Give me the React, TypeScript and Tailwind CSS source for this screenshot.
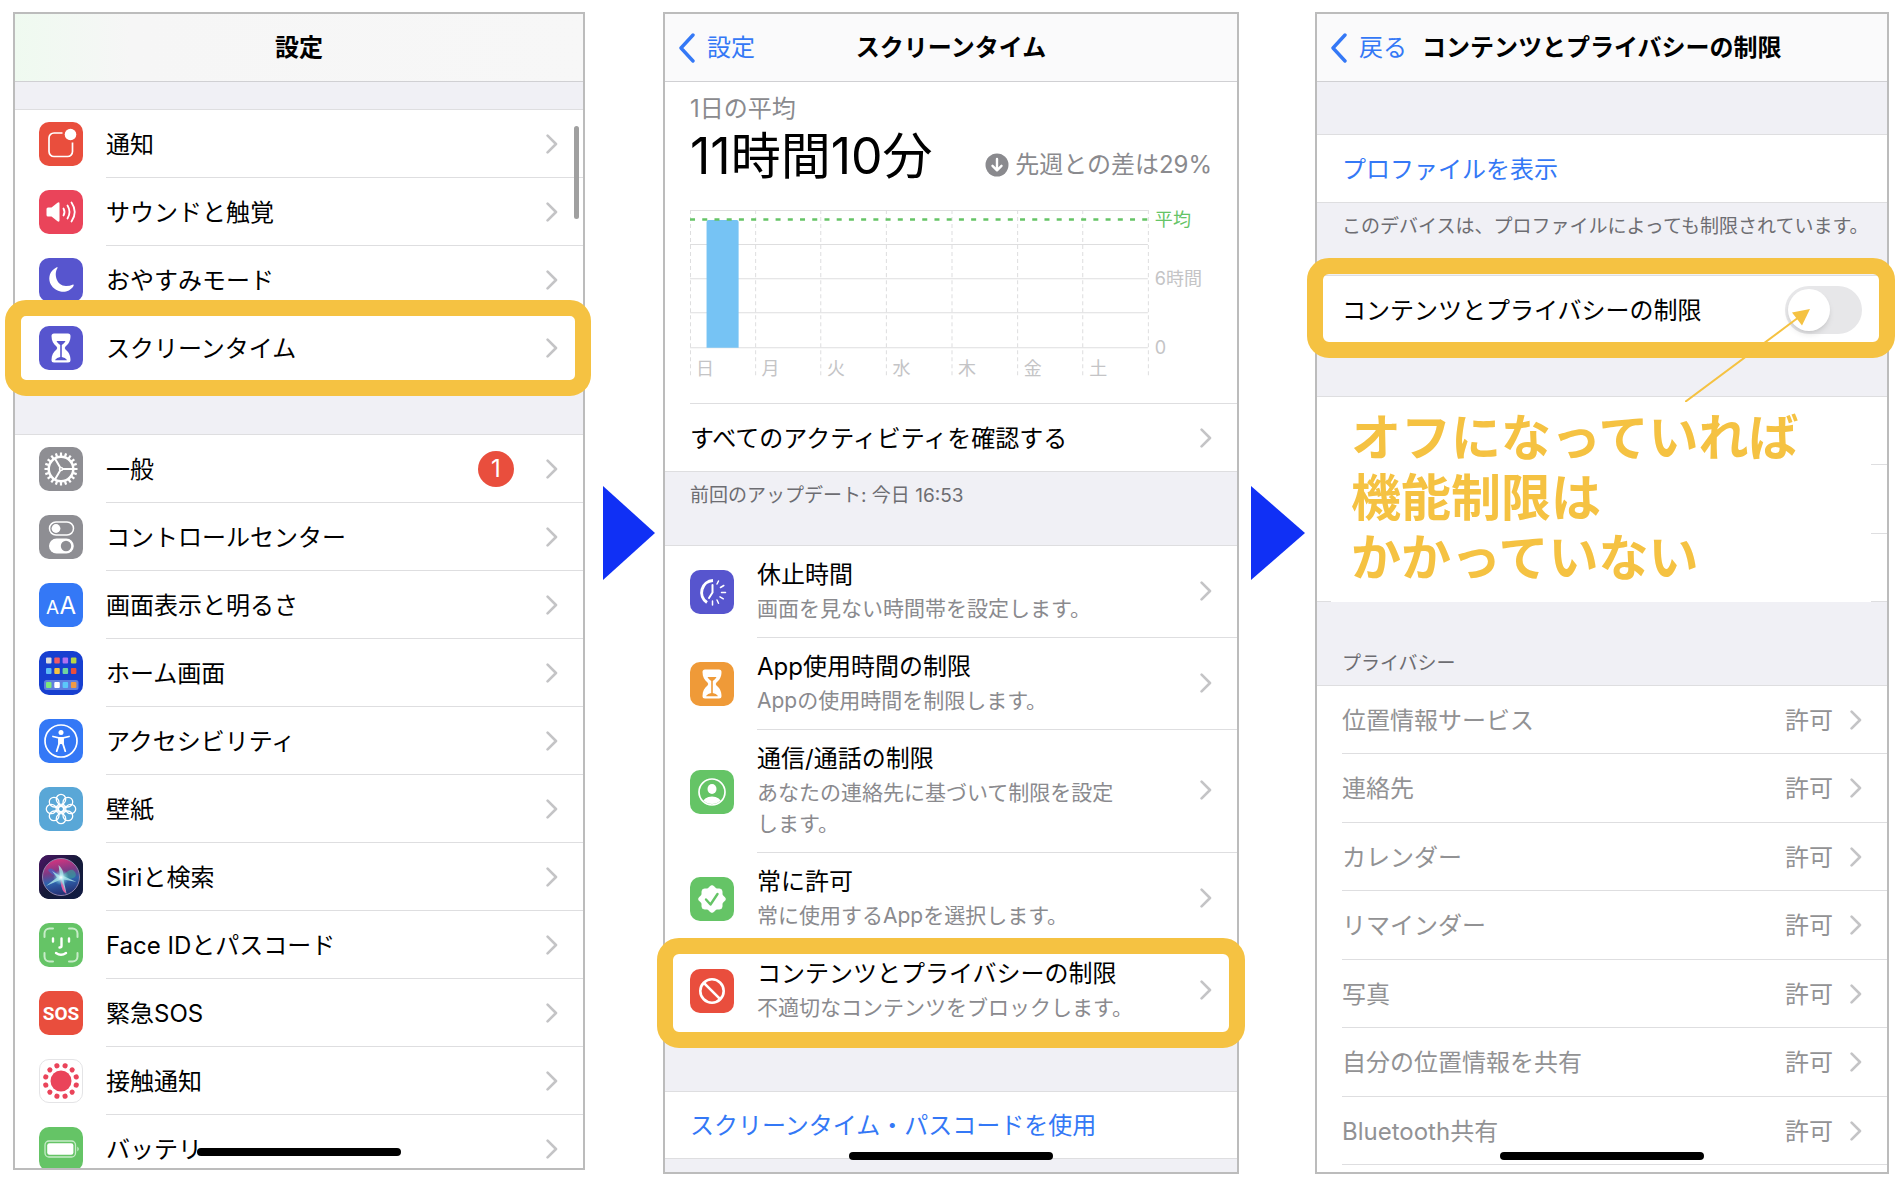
import React from 'react';

type IconProps = { className: string; children: React.ReactNode };

function IconTile({ className, children }: IconProps) {
  return (
    <svg viewBox="0 0 44 44" aria-hidden="true" className={`w-11 h-11 shrink-0 rounded-[10px] ${className}`}>
      {children}
    </svg>
  );
}

function Chevron() {
  return (
    <svg viewBox="0 0 12 20" aria-hidden="true" className="w-3 h-5 shrink-0 text-[#c4c4c6]">
      <path d="M1.6 1.6 10 10l-8.400 8.400" fill="none" stroke="currentColor" strokeWidth="2.600" strokeLinecap="round" strokeLinejoin="round" />
    </svg>
  );
}

function Hourglass({ bg }: { bg: string }) {
  return (
    <>
      <path
        d="M15 7.500h14q2.500 0 2.500 2.500c0 5-2 8-5 10.500q-1.500 1.500 0 3c3 2.500 5 5.500 5 10.500q0 2.500-2.500 2.500H15q-2.500 0-2.500-2.500c0-5 2-8 5-10.500q1.500-1.500 0-3c-3-2.500-5-5.500-5-10.500q0-2.500 2.500-2.500z"
        fill="white"
      />
      <path d="M17.500 15h9q-1 2.500-3.700 4v12q3.500.5 5 2.700v.6H16.200v-.6q1.500-2.200 5-2.700V19q-2.700-1.500-3.700-4z" fill={bg} />
    </>
  );
}

const spokes = [0, 45, 90, 135, 180, 225, 270, 315];
const teeth = Array.from({ length: 20 }, (_, i) => i * 18);
const dots = Array.from({ length: 12 }, (_, i) => 15 + i * 30);

const icons = {
  notice: (
    <IconTile className="bg-[#e94e3d]">
      <path d="M23.500 11H15a5 5 0 0 0-5 5v13.500a5 5 0 0 0 5 5h13.500a5 5 0 0 0 5-5V20.500" fill="none" stroke="white" strokeWidth="1.700" />
      <circle cx="31.500" cy="12.500" r="5.800" fill="white" />
    </IconTile>
  ),
  sound: (
    <IconTile className="bg-[#ea445a]">
      <path d="M7.500 19q0-1.500 1.500-1.500h3.500l6-4.700q2-1.300 2 1v16.400q0 2.300-2 1l-6-4.700H9q-1.500 0-1.500-1.500z" fill="white" />
      <path d="M24.500 18.500q2 3.500 0 7M28.500 15.500q4 6.500 0 13M32.500 12.500q6.500 9.500 0 19" fill="none" stroke="white" strokeWidth="1.800" strokeLinecap="round" />
    </IconTile>
  ),
  moon: (
    <IconTile className="bg-[#5755ce]">
      <path d="M18.500 10C14.500 16 17.500 28 27 28q4 0 6.500-1.300c1-.5 1.500.3 1 1.300C31.500 33 26 34.500 21.500 33.500 8.500 30.500 6.500 15 17.300 9.600c1-.5 1.700-.2 1.200.4z" fill="white" />
    </IconTile>
  ),
  screenTime: (
    <IconTile className="bg-[#5755ce]">
      <Hourglass bg="#5755ce" />
    </IconTile>
  ),
  general: (
    <IconTile className="bg-[#8e8e93]">
      <g stroke="white" fill="none">
        <circle cx="22" cy="22" r="12.300" strokeWidth="2.500" />
        {teeth.map((a) => (
          <path key={a} d="M22 9V5.500" strokeWidth="2.200" transform={`rotate(${a} 22 22)`} />
        ))}
        <circle cx="22" cy="22" r="1.500" strokeWidth="1.500" />
        <path d="M23 22h11.500M21.500 21 15.800 11.300M21.500 23l-5.700 9.700" strokeWidth="2" />
      </g>
    </IconTile>
  ),
  control: (
    <IconTile className="bg-[#8e8e93]">
      <rect x="10.500" y="7" width="24" height="13" rx="6.500" fill="none" stroke="white" strokeWidth="1.500" />
      <circle cx="17" cy="13.500" r="4.400" fill="white" />
      <rect x="10" y="23.500" width="24.800" height="15" rx="7.500" fill="white" />
      <circle cx="27" cy="31" r="5.200" fill="#8e8e93" />
    </IconTile>
  ),
  display: (
    <IconTile className="bg-[#3478f6]">
      <text x="7" y="31" fontSize="19" fill="white">A</text>
      <text x="20.500" y="31" fontSize="24" fill="white">A</text>
    </IconTile>
  ),
  home: (
    <IconTile className="bg-[#173fd0]">
      <rect x="5" y="29" width="34.500" height="10" rx="2.500" fill="#5f7fdf" />
      {[
        ['#dcdcdc', '#ef5b66', '#b070f0', '#b8d545'],
        ['#5cbcf5', '#f5c242', '#6fd3a0', '#ea4e3d'],
        ['#7de87a', '#ffffff', '#5cc8fa', '#f09a45'],
      ].map((row, r) =>
        row.map((color, c) => (
          <rect key={color} x={7 + c * 8.3} y={[6.5, 17, 31][r]} width="5.500" height="6" rx="1" fill={color} />
        ))
      )}
    </IconTile>
  ),
  accessibility: (
    <IconTile className="bg-[#3478f6]">
      <circle cx="22" cy="22" r="16" fill="none" stroke="white" strokeWidth="1.700" />
      <circle cx="22" cy="13.500" r="2.500" fill="white" />
      <path d="M14 17.500 20 19v6l-2.300 7.200M30 17.500 24 19v6l2.300 7.200" fill="none" stroke="white" strokeWidth="1.800" strokeLinecap="round" />
      <path d="M19.500 18h5v7.500L22 25l-2.500.5z" fill="white" />
    </IconTile>
  ),
  wallpaper: (
    <IconTile className="bg-[#59a7d7]">
      <g fill="none" stroke="white" strokeWidth="1.300">
        {spokes.map((a) => (
          <ellipse key={a} cx="22" cy="12.300" rx="4.700" ry="5" transform={`rotate(${a} 22 22)`} />
        ))}
        {spokes.map((a) => (
          <path key={a} d="M22 19.500 19.500 16.500M22 19.500 24.500 16.500" transform={`rotate(${a} 22 22)`} />
        ))}
        <circle cx="22" cy="22" r="2.600" />
      </g>
    </IconTile>
  ),
  siri: (
    <IconTile className="bg-[#17133a]">
      <defs>
        <linearGradient id="siriTop" x1="0" y1="0" x2="1" y2="1">
          <stop offset="0" stopColor="#4a1464" />
          <stop offset="0.500" stopColor="#151a38" />
          <stop offset="1" stopColor="#101c44" />
        </linearGradient>
        <linearGradient id="siriOrb" x1="0.400" y1="0" x2="0.600" y2="1">
          <stop offset="0" stopColor="#d8347e" />
          <stop offset="0.350" stopColor="#7c3a86" />
          <stop offset="0.600" stopColor="#2f63ae" />
          <stop offset="1" stopColor="#232a6c" />
        </linearGradient>
        <radialGradient id="siriGlow">
          <stop offset="0" stopColor="#ffffff" />
          <stop offset="0.300" stopColor="#bff0f5" stopOpacity="0.800" />
          <stop offset="1" stopColor="#62cfd8" stopOpacity="0" />
        </radialGradient>
      </defs>
      <rect width="44" height="44" fill="url(#siriTop)" />
      <circle cx="22" cy="22" r="18.500" fill="url(#siriOrb)" stroke="#9a8fb8" strokeWidth="0.900" />
      <path d="M22 22C15 16 13 11 9 15c3 5 8 6 13 7z" fill="#4667c8" opacity="0.700" />
      <path d="M22 22c4-3 10-11 14-5 3 5-2 9-14 5z" fill="#38a59a" opacity="0.600" />
      <path d="M21 21 19.500 10q5 4 5 11l13 6-13-2.500 3 14q-4-5-5.500-14L7 31l11-8.500L13 16z" fill="#b8f2ee" opacity="0.750" />
      <path d="m22 24 5.500 15q-5-2-6-13z" fill="#ef5fa6" opacity="0.900" />
      <circle cx="22" cy="22.500" r="8" fill="url(#siriGlow)" />
    </IconTile>
  ),
  faceId: (
    <IconTile className="bg-[#65c466]">
      <path d="M5.500 14v-3.500a5 5 0 0 1 5-5H14M30 5.500h3.500a5 5 0 0 1 5 5V14M38.500 30v3.500a5 5 0 0 1-5 5H30M14 38.500h-3.500a5 5 0 0 1-5-5V30" fill="none" stroke="#c8ecc9" strokeWidth="2" strokeLinecap="round" />
      <path d="M14 15.500v3M30 15.500v3M22.500 15.500v7.500q0 1.500-2 1.500M17 30q5 3.500 10 0" fill="none" stroke="white" strokeWidth="2.400" strokeLinecap="round" />
    </IconTile>
  ),
  sos: (
    <IconTile className="bg-[#e94e3d]">
      <text x="22" y="29" fontSize="19" fontWeight="700" textAnchor="middle" fill="white" className="font-['Roboto',sans-serif]">SOS</text>
    </IconTile>
  ),
  exposure: (
    <IconTile className="bg-white border border-[#e4e4e6]">
      <circle cx="22" cy="22" r="11" fill="#ea445a" />
      {dots.map((a) => (
        <circle key={a} cx="22" cy="5.500" r="2.700" fill="#ea445a" transform={`rotate(${a} 22 22)`} />
      ))}
    </IconTile>
  ),
  battery: (
    <IconTile className="bg-[#65c466]">
      <rect x="6" y="14" width="30.500" height="16" rx="4" fill="none" stroke="#c8ecc9" strokeWidth="1.300" />
      <rect x="8.200" y="16.200" width="26.200" height="11.600" rx="2.200" fill="white" />
      <path d="M38.300 19.500q3 2.500 0 5z" fill="#c8ecc9" />
    </IconTile>
  ),
  downtime: (
    <IconTile className="bg-[#5755ce]">
      <path d="M23 10.500a12 12 0 0 0-6 22" fill="none" stroke="white" strokeWidth="3" />
      <path d="M22.500 15v7.500l-3.500 5.500" fill="none" stroke="white" strokeWidth="2" strokeLinecap="round" />
      <path d="m27 14 1.500-3M30.500 17.500l3.300-2M31.500 22.500h4M30 26.800l3.300 2M27 30l1.500 3.300M22.500 31v4" stroke="white" strokeWidth="1.500" strokeLinecap="round" />
    </IconTile>
  ),
  appLimit: (
    <IconTile className="bg-[#ef9a38]">
      <Hourglass bg="#ef9a38" />
    </IconTile>
  ),
  communication: (
    <IconTile className="bg-[#65c466]">
      <clipPath id="personClip">
        <circle cx="22" cy="22" r="12" />
      </clipPath>
      <circle cx="22" cy="22" r="13" fill="none" stroke="white" strokeWidth="1.700" />
      <ellipse cx="22" cy="19" rx="4.500" ry="5" fill="white" />
      <ellipse cx="22" cy="33" rx="9.500" ry="6.500" fill="white" clipPath="url(#personClip)" />
    </IconTile>
  ),
  alwaysAllowed: (
    <IconTile className="bg-[#65c466]">
      {[0, 45].map((a) => (
        <rect key={a} x="12" y="12" width="20" height="20" rx="2.500" fill="white" stroke="white" strokeWidth="1" transform={`rotate(${a} 22 22)`} />
      ))}
      <path d="m16 22.500 4.500 5 7-10.500" fill="none" stroke="#65c466" strokeWidth="2.400" strokeLinecap="round" strokeLinejoin="round" />
    </IconTile>
  ),
  restriction: (
    <IconTile className="bg-[#e94e3d]">
      <circle cx="22" cy="22" r="11.700" fill="none" stroke="white" strokeWidth="2.600" />
      <path d="m13.800 13.800 16.400 16.400" stroke="white" strokeWidth="2.600" />
    </IconTile>
  ),
};

type SettingRow = { icon: keyof typeof icons; label: string; badge?: number };

const topRows: SettingRow[] = [
  { icon: 'notice', label: '通知' },
  { icon: 'sound', label: 'サウンドと触覚' },
  { icon: 'moon', label: 'おやすみモード' },
  { icon: 'screenTime', label: 'スクリーンタイム' },
];

const mainRows: SettingRow[] = [
  { icon: 'general', label: '一般', badge: 1 },
  { icon: 'control', label: 'コントロールセンター' },
  { icon: 'display', label: '画面表示と明るさ' },
  { icon: 'home', label: 'ホーム画面' },
  { icon: 'accessibility', label: 'アクセシビリティ' },
  { icon: 'wallpaper', label: '壁紙' },
  { icon: 'siri', label: 'Siriと検索' },
  { icon: 'faceId', label: 'Face IDとパスコード' },
  { icon: 'sos', label: '緊急SOS' },
  { icon: 'exposure', label: '接触通知' },
];

const limitRows: { icon: keyof typeof icons; title: string; lines: string[] }[] = [
  { icon: 'downtime', title: '休止時間', lines: ['画面を見ない時間帯を設定します。'] },
  { icon: 'appLimit', title: 'App使用時間の制限', lines: ['Appの使用時間を制限します。'] },
  { icon: 'communication', title: '通信/通話の制限', lines: ['あなたの連絡先に基づいて制限を設定', 'します。'] },
  { icon: 'alwaysAllowed', title: '常に許可', lines: ['常に使用するAppを選択します。'] },
  { icon: 'restriction', title: 'コンテンツとプライバシーの制限', lines: ['不適切なコンテンツをブロックします。'] },
];

const privacyRows = ['位置情報サービス', '連絡先', 'カレンダー', 'リマインダー', '写真', '自分の位置情報を共有', 'Bluetooth共有'];

const days = ['日', '月', '火', '水', '木', '金', '土'];

function Row({ icon, label, badge }: SettingRow) {
  return (
    <a href="#" className="flex items-center h-[68px] pl-6">
      {icons[icon]}
      <span className="ml-[23px] flex flex-1 self-stretch items-center border-b border-[#dedee0] pr-[25px]">
        <span className="flex-1 pt-0.5">{label}</span>
        {badge && (
          <span className="flex items-center justify-center w-9 h-9 mr-8 rounded-full bg-[#e94e3d] text-white">{badge}</span>
        )}
        <Chevron />
      </span>
    </a>
  );
}

function BackLink({ label }: { label: string }) {
  return (
    <a href="#" className="flex items-center gap-3 pl-[13px] pr-[15px] text-[#3478f6]">
      <svg viewBox="0 0 17 30" aria-hidden="true" className="w-[17px] h-[30px]">
        <path d="M15 2 3 15l12 13" fill="none" stroke="currentColor" strokeWidth="3.400" strokeLinecap="round" strokeLinejoin="round" />
      </svg>
      {label}
    </a>
  );
}

function HomeBar() {
  return <div className="absolute bottom-3 left-1/2 -translate-x-1/2 w-[204px] h-2 rounded-full bg-black" />;
}

function Arrow({ className }: { className: string }) {
  return (
    <div className={`pt-[474px] ${className}`}>
      <svg viewBox="0 0 53 94" preserveAspectRatio="none" aria-hidden="true" className="w-full h-[94px]">
        <path d="M0 0 53 47 0 94z" fill="#1030f5" />
      </svg>
    </div>
  );
}

function UsageChart() {
  return (
    <svg viewBox="0 0 521 170" role="img" aria-label="1日の平均" className="block w-full mt-[23px]">
      <g stroke="#dededf" strokeWidth="1">
        {[1.5, 35.5, 69.5, 103.5, 138.5].map((y) => (
          <path key={y} d={`M0 ${y}H457`} />
        ))}
        {[0.5, 65.5, 130.5, 196, 261.5, 327, 392, 457.5].map((x) => (
          <path key={x} d={`M${x} 1V169`} strokeDasharray="4 3" />
        ))}
      </g>
      <path d="M16.500 138.500V13q0-2 2-2h28q2 0 2 2v125.500z" fill="#76c3f4" />
      <path d="M0 10.500H457" stroke="#65c466" strokeWidth="2.500" strokeDasharray="5 7.200" />
      <g fontSize="18" fill="#c4c4c6">
        {days.map((day, i) => (
          <text key={day} x={6 + i * 65.4} y="166">{day}</text>
        ))}
        <text x="464" y="17" fill="#65c466">平均</text>
        <text x="464" y="76">6時間</text>
        <text x="464" y="145">0</text>
      </g>
    </svg>
  );
}

export default function App() {
  return (
    <main
      lang="ja"
      className="grid grid-cols-[572fr_78fr_576fr_76fr_574fr] pt-3 pb-4 pl-[13px] pr-[15px] min-h-screen items-start bg-white text-black text-[24px] leading-[34px] font-[390] font-['Inter','Noto_Sans_CJK_JP',sans-serif]"
    >
      {/* Settings */}
      <section className="relative border-2 border-[#bcbcbc] bg-[#f0f0f5]">
        <header className="flex items-center justify-center h-[68px] border-b border-[#d0d0d3] bg-linear-to-r from-[#effaf0] via-[#f6f6f6] via-20% to-[#f7f7f7]">
          <h2 className="font-bold">設定</h2>
        </header>

        <ul className="mt-[27px] bg-white border-t border-[#dedee0]">
          {topRows.map((row) => (
            <li key={row.icon} className="relative">
              <Row {...row} />
              {row.icon === 'screenTime' && (
                <div className="absolute -left-2.5 -right-2 -inset-y-3.5 z-10 border-[16px] border-[#f5c242] rounded-[21px] pointer-events-none" />
              )}
            </li>
          ))}
        </ul>

        <ul className="mt-[52px] bg-white border-t border-[#dedee0]">
          {mainRows.map((row) => (
            <li key={row.icon}>
              <Row {...row} />
            </li>
          ))}
          <li className="h-[53px] overflow-hidden">
            <Row icon="battery" label="バッテリ" />
          </li>
        </ul>

        <div className="absolute top-28 right-1 w-[5px] h-[93px] rounded-full bg-[#a0a0a0]" />
        <HomeBar />
      </section>

      <Arrow className="pl-[18px] pr-2" />

      {/* Screen time */}
      <section className="relative border-2 border-[#bcbcbc] bg-[#f0f0f5]">
        <header className="grid grid-cols-[1fr_auto_1fr] items-center h-[68px] border-b border-[#d0d0d3] bg-[#fafafb]">
          <BackLink label="設定" />
          <h2 className="font-bold">スクリーンタイム</h2>
        </header>

        <div className="bg-white pl-[25px] border-b border-[#dedee0]">
          <div className="pr-[25px] pt-[10px] pb-6">
            <p className="text-[#8a8a8e]">1日の平均</p>
            <div className="flex items-end justify-between">
              <p className="text-[50px] leading-[60px]">11時間10分</p>
              <p className="flex items-center gap-1.5 pb-1 text-[#8a8a8e]">
                <svg viewBox="0 0 24 24" aria-hidden="true" className="w-6 h-6">
                  <circle cx="12" cy="12" r="11.500" fill="currentColor" />
                  <path d="M12 6v11M7.500 12.800 12 17.300l4.500-4.500" fill="none" stroke="white" strokeWidth="2.400" strokeLinecap="round" strokeLinejoin="round" />
                </svg>
                先週との差は29%
              </p>
            </div>
            <UsageChart />
          </div>
          <a href="#" className="flex items-center justify-between h-[68px] pr-[25px] border-t border-[#dedee0]">
            <span className="pt-0.5">すべてのアクティビティを確認する</span>
            <Chevron />
          </a>
        </div>

        <p className="h-[73px] pt-[9px] pl-[25px] text-[19px] leading-[30px] text-[#6d6d72]">前回のアップデート: 今日 16:53</p>

        <ul className="bg-white border-t border-[#dedee0]">
          {limitRows.map((row, i) => (
            <li key={row.icon} className="relative">
              <a href="#" className="flex items-center pl-[25px]">
                {icons[row.icon]}
                <span className={`flex flex-1 items-center ml-[23px] pt-[11px] pb-[13px] pr-[25px] border-b ${i === limitRows.length - 1 ? 'border-white' : 'border-[#dedee0]'}`}>
                  <span className="flex-1">
                    <span className="block leading-9">{row.title}</span>
                    {row.lines.map((line) => (
                      <span key={line} className="block text-[21px] leading-[31px] text-[#8a8a8e]">{line}</span>
                    ))}
                  </span>
                  <Chevron />
                </span>
              </a>
              {row.icon === 'restriction' && (
                <div className="absolute -inset-x-2 -top-[7px] -bottom-[11px] z-10 border-[16px] border-[#f5c242] rounded-[22px] pointer-events-none" />
              )}
            </li>
          ))}
        </ul>

        <div className="mt-[54px] bg-white border-y border-[#dedee0]">
          <button type="button" className="block w-full h-[66px] pt-0.5 pl-[25px] text-left text-[#3478f6]">
            スクリーンタイム・パスコードを使用
          </button>
        </div>
        <div className="h-[13px]" />
        <HomeBar />
      </section>

      <Arrow className="pl-3 pr-[10px]" />

      {/* Content & privacy restrictions */}
      <section className="relative flex flex-col self-stretch border-2 border-[#bcbcbc] bg-[#f0f0f5]">
        <header className="flex items-center h-[68px] border-b border-[#d0d0d3] bg-[#fafafb]">
          <BackLink label="戻る" />
          <h2 className="font-bold">コンテンツとプライバシーの制限</h2>
        </header>

        <div className="mt-[52px] bg-white border-y border-[#dedee0]">
          <button type="button" className="block w-full h-[67px] pt-0.5 pl-[25px] text-left text-[#3478f6]">
            プロファイルを表示
          </button>
        </div>
        <p className="h-[72px] pt-[9px] pl-[25px] text-[19px] leading-[30px] text-[#6d6d72] whitespace-nowrap">
          このデバイスは、プロファイルによっても制限されています。
        </p>

        <div className="relative bg-white border-y border-[#dedee0]">
          <label className="flex items-center justify-between h-[68px] pl-[25px] pr-[25px]">
            <span className="pt-0.5">コンテンツとプライバシーの制限</span>
            <input
              type="checkbox"
              role="switch"
              className="appearance-none w-[77px] h-12 rounded-full bg-[#e7e7e9] p-[3px] before:block before:w-[42px] before:h-[42px] before:rounded-full before:bg-white before:shadow-md checked:bg-[#65c466] checked:before:ml-[29px]"
            />
          </label>
          <div className="absolute -left-2.5 -right-2 -top-[18px] -bottom-3.5 z-10 border-[16px] border-[#f5c242] rounded-[22px] pointer-events-none" />
          <svg viewBox="0 0 125 93" aria-hidden="true" className="absolute right-[77px] top-[33px] z-20 w-[125px] h-[93px] pointer-events-none">
            <path d="M0 93 114 8" stroke="#f5c242" strokeWidth="2" />
            <path d="M125 0 107 3.500 117 16.500z" fill="#f5c242" />
          </svg>
        </div>

        {/* The note covers the rows, only the ends of their lines stay visible */}
        <div className="flex mt-[51px] bg-white border-t border-[#dedee0]">
          <div className="w-[14px] border-b border-[#dedee0]" />
          <p className="flex-1 pt-[11px] pb-[14px] pl-5 text-[50px] leading-[60px] font-bold text-[#f5c242]">
            オフになっていれば
            <br />
            機能制限は
            <br />
            かかっていない
          </p>
          <div className="flex flex-col w-4">
            <div className="flex-1 border-b border-[#dedee0]" />
            <div className="flex-1 border-b border-[#dedee0]" />
            <div className="flex-1 border-b border-[#dedee0]" />
          </div>
        </div>
        <h3 className="h-[83px] pt-[47px] pl-[25px] text-[19px] leading-[30px] text-[#6d6d72]">プライバシー</h3>

        <ul className="flex flex-1 flex-col bg-white border-t border-[#dedee0] pb-[7px] text-[#929294]">
          {privacyRows.map((label) => (
            <li key={label} className="flex flex-1 pl-[25px]">
              <a href="#" className="flex flex-1 items-center min-h-[68px] pr-[25px] border-b border-[#dedee0]">
                <span className="flex-1 pt-0.5">{label}</span>
                <span className="mr-[17px] pt-0.5">許可</span>
                <Chevron />
              </a>
            </li>
          ))}
        </ul>
        <HomeBar />
      </section>
    </main>
  );
}
